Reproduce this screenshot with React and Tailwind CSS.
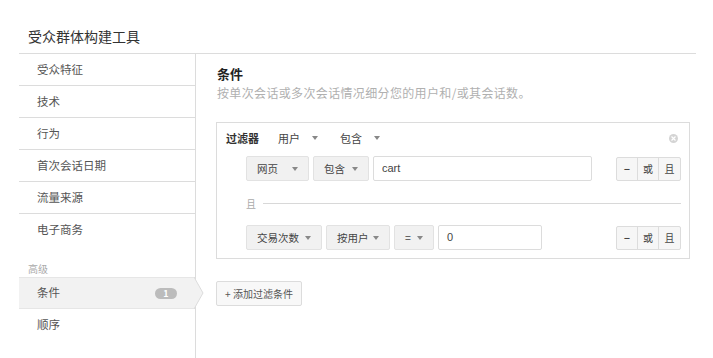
const FONT = { fontFamily: '"Noto Sans CJK SC", "Noto Sans", sans-serif' };

const Caret = () => (
  <svg width="6" height="4" viewBox="0 0 6 4" className="shrink-0">
    <path d="M0 0 L6 0 L3 4 Z" fill="#888" />
  </svg>
);

const Select = ({ label, width }) => (
  <div
    className="h-[25px] flex items-center justify-between pl-[10px] pr-[10px] bg-[#f1f1f1] border border-[#e2e2e2] rounded-[2px] text-[10.5px] text-[#444]"
    style={{ width }}
  >
    <span>{label}</span>
    <Caret />
  </div>
);

const Input = ({ value, width }) => (
  <div
    className="h-[25px] flex items-center pl-[8px] bg-white border border-[#dcdcdc] rounded-[2px] text-[11px] text-[#444]"
    style={{ width, fontFamily: '"Liberation Sans", "Noto Sans CJK SC", sans-serif' }}
  >
    {value}
  </div>
);

const RowButtons = () => (
  <div className="flex h-[24px] border border-[#dcdcdc] rounded-[2px] bg-[#f6f6f6] text-[10px] text-[#444]">
    <div className="w-[21px] flex items-center justify-center border-r border-[#dcdcdc] font-bold">−</div>
    <div className="w-[21px] flex items-center justify-center border-r border-[#dcdcdc]">或</div>
    <div className="w-[21px] flex items-center justify-center">且</div>
  </div>
);

const navItems = ["受众特征", "技术", "行为", "首次会话日期", "流量来源"];

export default function App() {
  return (
    <div className="w-[713px] h-[358px] bg-white overflow-hidden flex flex-col" style={FONT}>
      <div className="pt-[26px] pl-[28px] h-[53px] text-[14px] leading-[20px] text-[#333]">受众群体构建工具</div>
      <div className="ml-[19px] w-[677px] flex-1 border-t border-[#dcdcdc] flex">
        <div className="w-[177px] border-r border-[#dcdcdc] relative text-[11.5px] text-[#555]">
          {navItems.map((t) => (
            <div key={t} className="h-[32px] border-b border-[#dcdcdc] flex items-center pl-[18px]">
              {t}
            </div>
          ))}
          <div className="h-[31px] flex items-center pl-[18px]">电子商务</div>
          <div className="h-[32px] flex items-end pl-[9px] pb-[1px] text-[10px] leading-[14px] text-[#aaa]">高级</div>
          <div className="h-[32px] bg-[#f2f2f2] border-y border-[#e6e6e6] flex items-center pl-[18px] pr-[18px] justify-between relative">
            <span>条件</span>
            <span className="w-[22px] h-[11px] rounded-full bg-[#bcbcbc] text-white text-[9px] leading-[11px] flex items-center justify-center font-bold">1</span>
            <svg width="11" height="32" viewBox="0 0 11 32" className="absolute -right-[10px] -top-[1px]">
              <path d="M0 0 L9 16 L0 32 Z" fill="#f2f2f2" />
              <path d="M0 0 L9 16 L0 32" fill="none" stroke="#dcdcdc" strokeWidth="1" />
            </svg>
          </div>
          <div className="h-[32px] flex items-center pl-[18px]">顺序</div>
        </div>

        <div className="flex-1 pl-[21px] pr-[5px]">
          <div className="pt-[10px] text-[13px] leading-[20px] font-bold text-[#222]">条件</div>
          <div className="mt-[1px] text-[12px] leading-[16px] tracking-[0.35px] text-[#b0b0b0]">按单次会话或多次会话情况细分您的用户和/或其会话数。</div>

          <div className="mt-[21px] ml-[-1px] w-[474px] border border-[#dcdcdc] pl-[9px] pr-[8px] pt-[7px] pb-[8px]">
            <div className="h-[16px] flex items-center text-[11px] text-[#444]">
              <span className="font-bold text-[#333]">过滤器</span>
              <span className="ml-[19px] flex items-center gap-[12px]">用户<Caret /></span>
              <span className="ml-[22px] flex items-center gap-[12px]">包含<Caret /></span>
              <span className="ml-auto mr-[3px] w-[9px] h-[9px] rounded-full bg-[#d4d4d4] flex items-center justify-center">
                <svg width="5" height="5" viewBox="0 0 5 5">
                  <path d="M0.5 0.5 L4.5 4.5 M4.5 0.5 L0.5 4.5" stroke="#fff" strokeWidth="1.2" />
                </svg>
              </span>
            </div>

            <div className="mt-[10px] ml-[20px] flex items-center">
              <div className="flex items-center gap-[4px]">
                <Select label="网页" width={63} />
                <Select label="包含" width={56} />
                <Input value="cart" width={219} />
              </div>
              <div className="ml-auto">
                <RowButtons />
              </div>
            </div>

            <div className="mt-[14px] ml-[20px] h-[16px] flex items-center gap-[7px]">
              <span className="text-[10px] text-[#aaa]">且</span>
              <div className="flex-1 border-t border-[#d8d8d8]"></div>
            </div>

            <div className="mt-[14px] ml-[20px] flex items-center">
              <div className="flex items-center gap-[4px]">
                <Select label="交易次数" width={76} />
                <Select label="按用户" width={64} />
                <Select label="=" width={40} />
                <Input value="0" width={104} />
              </div>
              <div className="ml-auto">
                <RowButtons />
              </div>
            </div>
          </div>

          <div className="mt-[22px] ml-[-1px] w-[86px] h-[25px] border border-[#dcdcdc] rounded-[2px] bg-[#f8f8f8] flex items-center justify-center text-[10px] text-[#555]">
            + 添加过滤条件
          </div>
        </div>
      </div>
    </div>
  );
}
